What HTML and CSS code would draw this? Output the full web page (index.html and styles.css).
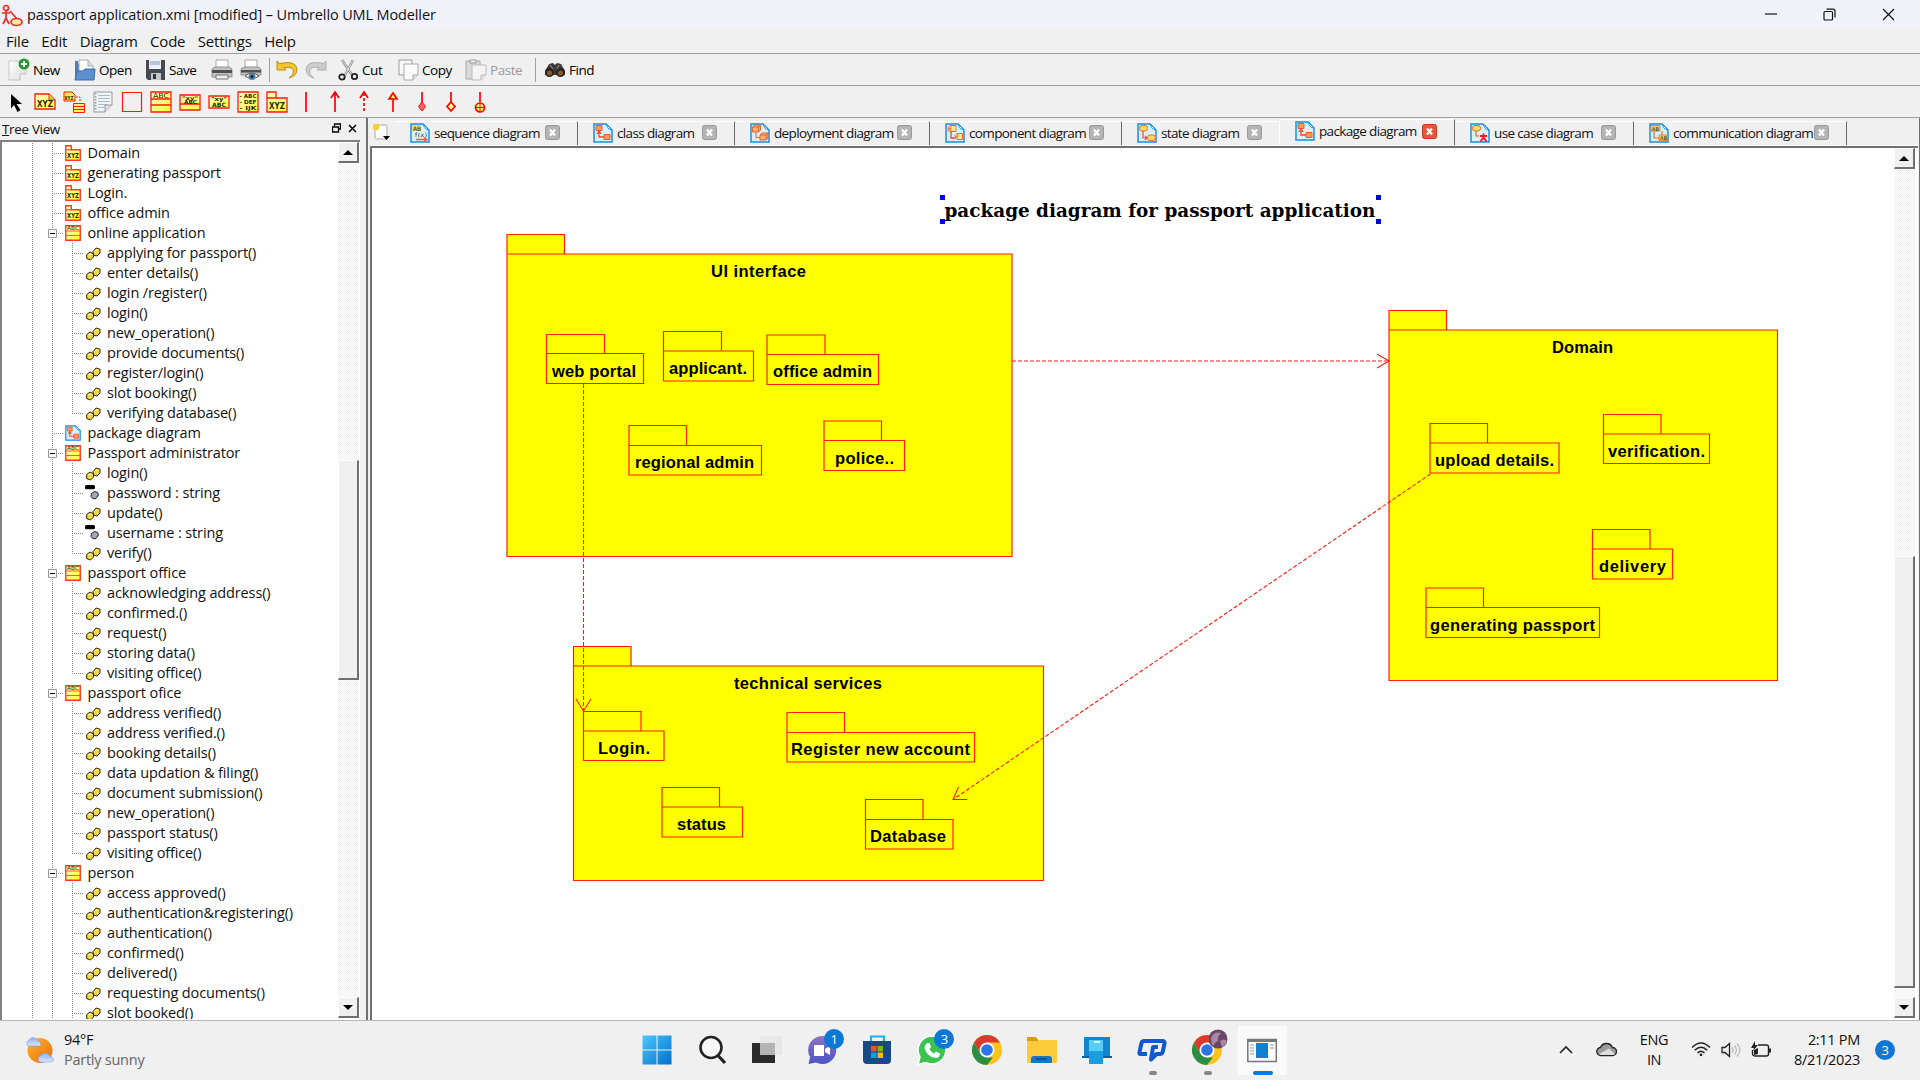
FILE: index.html
```html
<!DOCTYPE html>
<html lang="en">
<head>
<meta charset="utf-8">
<title>passport application.xmi [modified] – Umbrello UML Modeller</title>
<link rel="stylesheet" href="styles.css">
</head>
<body>
<svg class="defs" width="40" height="40" aria-hidden="true">
  <defs>
    <linearGradient id="yel" x1="0" y1="0" x2="1" y2="1"><stop offset="0" stop-color="#ffffc8"/><stop offset="1" stop-color="#ffff30"/></linearGradient>
    <linearGradient id="doc" x1="0" y1="0" x2="1" y2="1"><stop offset="0" stop-color="#fff"/><stop offset="1" stop-color="#ddd"/></linearGradient>
    <linearGradient id="win" x1="0" y1="0" x2="1" y2="1"><stop offset="0" stop-color="#4cc8fa"/><stop offset="1" stop-color="#0070cc"/></linearGradient>
    <linearGradient id="sun" x1="0" y1="0" x2="1" y2="1"><stop offset="0" stop-color="#fab52a"/><stop offset="1" stop-color="#ee6c0e"/></linearGradient>
    <linearGradient id="cld" x1="0" y1="0" x2="0" y2="1"><stop offset="0" stop-color="#8fb0ee"/><stop offset="1" stop-color="#dbe6fc"/></linearGradient>
    <linearGradient id="pur" x1="0" y1="0" x2="0" y2="1"><stop offset="0" stop-color="#9073bd"/><stop offset="1" stop-color="#4b55c8"/></linearGradient>
  </defs>
  <symbol id="g1" viewBox="0 0 62 20"><path class="guide" d="M30.5 0V20M50.5 0V20M52 10.5H61"/></symbol>
  <symbol id="g1x" viewBox="0 0 62 20"><path class="guide" d="M30.5 0V20M50.5 0V20M56 10.5H61"/><path d="M46.5 6.5h8v8h-8z" fill="#fff" stroke="#999"/><path d="M48 10.5h5" stroke="#000"/></symbol>
  <symbol id="g2" viewBox="0 0 82 20"><path class="guide" d="M30.5 0V20M50.5 0V20M70.5 0V20M72 10.5H81"/></symbol>
  <symbol id="g2e" viewBox="0 0 82 20"><path class="guide" d="M30.5 0V20M50.5 0V20M70.5 0V10M70 10.5H81"/></symbol>
  <symbol id="pkg" viewBox="0 0 16 16"><path d="M.75.75h5.5v4h9v10.5H.75z" fill="url(#yel)" stroke="#ff3a20" stroke-width="1.4"/><path d="M1 4.8h6" stroke="#ff3a20"/><text x="2" y="13.4" font-size="7" textLength="12" lengthAdjust="spacingAndGlyphs" class="it b">XYZ</text></symbol>
  <symbol id="cls" viewBox="0 0 16 16"><path d="M.75.75h14.5v14.5H.75z" fill="url(#yel)" stroke="#ff3a20" stroke-width="1.4"/><path d="M1 6h14M1 10.5h14" stroke="#ff5a40"/><text x="2" y="5.2" font-size="5.5" textLength="12" lengthAdjust="spacingAndGlyphs" class="it">ABC</text></symbol>
  <symbol id="op" viewBox="0 0 15 14"><g fill="#f2d848" stroke="#2b2600"><path d="M.7 7.500l3.300-2.500 3.500 1.800v3.200L4.500 13 .7 11.500z"/><path d="M7 4.500l3-3.500 4 1.200v3.800L11 9 7.500 8z"/></g><path d="M2.500 8l2-1 1.500.8M8.600 4.500l1.800-1.800 1.600.6" stroke="#fffab0" fill="none"/></symbol>
  <symbol id="at" viewBox="0 0 15 16"><rect x="0" y="0" width="10" height="4.200" rx="1.500" fill="#000"/><path d="M6.500 8.500l3-2 3 .8 1 2.700-2.500 3.500-3 .3-2-2.300z" fill="#a8a4b4" stroke="#222"/></symbol>
  <symbol id="dg" viewBox="0 0 20 20"><path d="M1 1h12l6 6v12H1z" fill="#d9effc" stroke="#1a8ee0" stroke-width="1.500"/><path d="M13 1c1.500 2 .5 5 6 6z" fill="#fff" stroke="#1a8ee0"/></symbol>
  <symbol id="d-seq" viewBox="0 0 20 20"><use href="#dg"/><path d="M2 2h9v6H2z" fill="#e6d36a"/><text x="3" y="7.500" font-size="6" class="it">AB</text><text x="5" y="14" font-size="6" class="it" textLength="12">f(x)</text><path d="M6 16.500h11m-3-2l3 2-3 2" fill="none" stroke="#f25a38" stroke-width="1.300"/></symbol>
  <symbol id="d-cls" viewBox="0 0 20 20"><use href="#dg"/><path d="M3 2.500h6v5H3zM11 11.500h6v5h-6z" fill="#fb9a63" stroke="#e85b2a"/><path d="M6 8v6h5m-7-3l2-3 2 3" fill="none" stroke="#ef4a2a" stroke-width="1.300"/></symbol>
  <symbol id="d-dep" viewBox="0 0 20 20"><use href="#dg"/><path d="M2.500 4l2-2h6v5l-2 2h-6zM10 12l2-2h6v5l-2 2h-6z" fill="#fdb271" stroke="#e5652a"/><path d="M2.500 4h6l2-2M8.500 4v5M10 12h6l2-2M16 12v5M6 9v5.500h4" fill="none" stroke="#e5652a"/></symbol>
  <symbol id="d-cmp" viewBox="0 0 20 20"><use href="#dg"/><path d="M5 2.500h6v6H5zM12 10.500h5.500v6H12z" fill="#ffe49b" stroke="#ef6a2a"/><path d="M3 4h3v1.500H3zM3 6.500h3V8H3zM10 12h3v1.500h-3z" fill="#fff" stroke="#ef6a2a" stroke-width=".8"/><path d="M6 9v6h5" fill="none" stroke="#ef4a2a" stroke-width="1.300"/></symbol>
  <symbol id="d-sta" viewBox="0 0 20 20"><use href="#dg"/><rect x="2.500" y="2.500" width="8" height="5.500" rx="2.500" fill="#f8da62" stroke="#ef6a2a"/><rect x="10.500" y="12" width="8" height="5.500" rx="2.500" fill="#f8da62" stroke="#ef6a2a"/><path d="M6 8v7h4m-2-2l2 2-2 2" fill="none" stroke="#ef4a2a" stroke-width="1.200"/></symbol>
  <symbol id="d-use" viewBox="0 0 20 20"><use href="#dg"/><rect x="2.500" y="2.500" width="8" height="5.500" rx="2.500" fill="#f8da62" stroke="#ef6a2a"/><path d="M6 8v5h3" fill="none" stroke="#ef6a2a" stroke-width="1.200"/><path d="M13.500 10.500v4.500M10 13h7M13.500 14.500l-3 4M13.500 14.500l3 4" fill="none" stroke="#f01818" stroke-width="1.900"/></symbol>
  <symbol id="d-com" viewBox="0 0 20 20"><use href="#dg"/><path d="M2 2.500h9v5.500H2zM10 12h8v5.500h-8z" fill="#e8cf78" stroke="#d98a4a"/><path d="M5 8v7h5M13 8v4" fill="none" stroke="#ef6a2a" stroke-width="1.200"/><text x="3" y="7.500" font-size="5" class="it">AB</text><text x="11" y="16.700" font-size="5" class="it">AB</text></symbol>
  <symbol id="x" viewBox="0 0 15 15"><rect x=".5" y=".5" width="14" height="14" rx="2" class="xb"/><path d="M5 4.500l5 6M10 4.500l-5 6" stroke="#fff" stroke-width="2.200"/></symbol>
  <symbol id="chrome" viewBox="0 0 30 30"><circle cx="15" cy="15" r="15" fill="#fbc31b"/><path d="M2 7.500A15 15 0 0 1 28 7.500H15L8.500 18.800z" fill="#db3a2c"/><path d="M2 7.500L8.500 18.800 15 22.500h6L15 30A15 15 0 0 1 2 7.500z" fill="#2a8f46"/><circle cx="15" cy="15" r="7.500" fill="#fff"/><circle cx="15" cy="15" r="5.800" fill="#2d74e8"/></symbol>
</svg>

<div class="window">
  <header class="titlebar">
    <svg width="22" height="24" viewBox="0 0 22 24" fill="none" stroke="#f02c22" stroke-width="1.700"><circle cx="5" cy="5" r="2.500"/><path d="M5 8v7M1 10h8M5 15l-3 6M5 15l3 6M9 8l7 8"/><ellipse cx="15.500" cy="19" rx="5.500" ry="3.500" fill="#ffe9a8"/></svg>
    <h1>passport application.xmi [modified] – Umbrello UML Modeller</h1>
    <div class="winbtns">
      <svg viewBox="0 0 13 13"><path d="M1 6h12"/></svg>
      <svg viewBox="0 0 13 13"><rect x="1" y="3.500" width="8.500" height="8.500" rx="1"/><path d="M3.500 1.200H10q2 0 2 2v6.300"/></svg>
      <svg viewBox="0 0 13 13"><path d="M1 1l11 11M12 1L1 12"/></svg>
    </div>
  </header>

  <nav class="menubar"><span>File</span><span>Edit</span><span>Diagram</span><span>Code</span><span>Settings</span><span>Help</span></nav>

  <div class="toolbar">
    <button class="t-new"><svg width="22" height="24" viewBox="0 0 22 24"><path d="M1 3h17v12l-6 7H1z" fill="url(#doc)" stroke="#c8c8c8"/><path d="M12 22v-6h6" fill="#f4f4f4" stroke="#bbb"/><circle cx="16" cy="6" r="5.500" fill="#1f9c2c"/><path d="M16 3v6M13 6h6" stroke="#fff" stroke-width="2"/></svg>New</button>
    <button class="t-open"><svg width="22" height="24" viewBox="0 0 22 24"><path d="M1 21V3h3v3h14v9z" fill="#4d7dbb"/><path d="M5 2h9l5 6v6H5z" fill="#fbfbfb" stroke="#aaa"/><path d="M14 2v6h5" fill="#ddd" stroke="#aaa"/><path d="M1 22l2-9h6l2-2h10l-1 11z" fill="#5d90cf" stroke="#3c6baa"/></svg>Open</button>
    <button class="t-save"><svg width="21" height="22" viewBox="0 0 21 22"><path d="M1 1h19v20H3l-2-2z" fill="#454a52"/><path d="M4 1h12v9H4z" fill="#eceff3"/><path d="M5 3h10M5 5h10" stroke="#7d96c0"/><path d="M6 14h10v7H6z" fill="#c4c8ce"/><path d="M8 15h3v5H8z" fill="#333"/></svg>Save</button>
    <button class="t-print"><svg width="22" height="22" viewBox="0 0 22 22"><path d="M5 1h12v8H5z" fill="#fff" stroke="#aaa"/><path d="M1 10l3-2h14l3 2v8H1z" fill="#c2c2c2" stroke="#909090"/><path d="M1 11h20v3H1z" fill="#505050"/><path d="M5 16h12v4H5z" fill="#eee" stroke="#777"/></svg></button>
    <button class="t-prev"><svg width="22" height="22" viewBox="0 0 22 22"><path d="M5 1h12v8H5z" fill="#fff" stroke="#aaa"/><path d="M1 10l3-2h14l3 2v6H1z" fill="#c2c2c2" stroke="#909090"/><path d="M1 11h20v2.500H1z" fill="#505050"/><path d="M5 17q6-6 14 0-7 5-14 0z" fill="#fff" stroke="#555"/><circle cx="12" cy="17.500" r="3.500" fill="#4d7ea8"/><circle cx="12" cy="17.500" r="1.500" fill="#123"/></svg></button>
    <i class="sep s1"></i>
    <button class="t-undo"><svg width="22" height="20" viewBox="0 0 22 20"><path d="M1 1l2.500 2.500Q20 0 21 9q0 7-8 9 5-3 4.500-7-.5-4.500-9.500-3.500L10 10H1z" fill="#f3c62c" stroke="#b98c10"/></svg></button>
    <button class="t-redo"><svg width="22" height="20" viewBox="0 0 22 20"><path d="M21 1l-2.500 2.500Q2 0 1 9q0 7 8 9-5-3-4.500-7 .5-4.500 9.500-3.500L12 10h9z" fill="#ccc" stroke="#b0b0b0"/></svg></button>
    <button class="t-cut"><svg width="21" height="22" viewBox="0 0 21 22"><path d="M4 1l10 15M15 1L7 16" stroke="#888" stroke-width="2.400"/><path d="M4 1l10 15M15 1L7 16" stroke="#e8e8e8" stroke-width="1"/><circle cx="4" cy="18" r="2.700" fill="none" stroke="#222" stroke-width="1.800"/><circle cx="16.500" cy="17.500" r="2.700" fill="none" stroke="#222" stroke-width="1.800"/></svg>Cut</button>
    <button class="t-copy"><svg width="21" height="22" viewBox="0 0 21 22"><path d="M1 1h13v15H1z" fill="#f8f8f8" stroke="#999"/><path d="M6 5h14v11l-5 5H6z" fill="#fbfbfb" stroke="#aaa"/><path d="M15 21v-5h5" fill="#e5e5e5" stroke="#aaa"/></svg>Copy</button>
    <button class="t-paste"><svg width="22" height="22" viewBox="0 0 22 22"><path d="M1 2h14v18H1z" fill="#d9d9d9" stroke="#aaa"/><path d="M5 1h6v3H5z" fill="#eee" stroke="#999"/><path d="M7 6h14v10l-5 5H7z" fill="#f4f4f4" stroke="#bbb"/><path d="M16 21v-5h5" fill="#e5e5e5" stroke="#bbb"/></svg>Paste</button>
    <i class="sep s2"></i>
    <button class="t-find"><svg width="22" height="16" viewBox="0 0 22 16"><path d="M1 9l4-7 4-1 2 2 2-2 4 1 4 7v4H1z" fill="#3d3a38"/><circle cx="5.500" cy="10.500" r="4.500" fill="#2a2420"/><circle cx="16.500" cy="10.500" r="4.500" fill="#2a2420"/><circle cx="5.500" cy="11" r="2.500" fill="#8a5a30"/><circle cx="16.500" cy="11" r="2.500" fill="#8a5a30"/><path d="M6 3l3 4M15 3l-2 4" stroke="#999"/></svg>Find</button>
  </div>

  <div class="drawbar">
    <svg viewBox="0 0 22 22"><path d="M6 3l11 10h-5.500l4 6-3 2-3.500-7L6 17.500z" fill="#000"/></svg>
    <svg viewBox="0 0 22 22"><path d="M1 3h14l6 6v9H1z" fill="url(#yel)" stroke="#f02000" stroke-width="1.300"/><path d="M15 3v6h6" fill="#ffd040" stroke="#f02000"/><text x="3" y="16" font-size="8.500" textLength="16" lengthAdjust="spacingAndGlyphs" class="it b">XYZ</text></svg>
    <svg viewBox="0 0 22 22"><path d="M1 1h8l3 3v6H1z" fill="#ffe95a" stroke="#f02000"/><text x="1.500" y="9" font-size="5.500" textLength="9" lengthAdjust="spacingAndGlyphs" class="it b">XYZ</text><path d="M13 6h4v5" fill="none" stroke="#f02000" stroke-dasharray="2 1"/><path d="M10.500 12.500h11v9h-11zM10.500 15.500h11M10.500 18.500h11" fill="#ffee70" stroke="#f02000"/></svg>
    <svg viewBox="0 0 22 22"><path d="M2 1h18v13l-7 7H2z" fill="#f2f4f6" stroke="#999"/><path d="M6 4.500h12M6 7.500h12M6 10.500h12M6 13.500h9M6 16.500h6" stroke="#a9bccd"/><path d="M13 21v-7h7" fill="#ddd" stroke="#999"/><path d="M3.800 2v18" stroke="#777" stroke-dasharray="1.500 1.500"/></svg>
    <svg viewBox="0 0 22 22"><path d="M1.500 1.500h19v19h-19z" fill="none" stroke="#ff1a10" stroke-width="1.200"/></svg>
    <svg viewBox="0 0 22 22"><path d="M1 1h20v20H1zM1 8h20M1 14h20" fill="url(#yel)" stroke="#ff1a10" stroke-width="1.300"/><text x="3" y="7" font-size="7" textLength="16" lengthAdjust="spacingAndGlyphs" class="it">ABC</text></svg>
    <svg viewBox="0 0 22 22"><path d="M1 4h20v15H1zM1 13h20" fill="url(#yel)" stroke="#ff1a10" stroke-width="1.300"/><text x="3" y="8.500" font-size="5" textLength="16" lengthAdjust="spacingAndGlyphs" class="it b">"xy"</text><text x="5" y="12.500" font-size="5.500" textLength="13" lengthAdjust="spacingAndGlyphs" class="it b">ABC</text></svg>
    <svg viewBox="0 0 22 22"><path d="M1 5h20v12H1z" fill="url(#yel)" stroke="#ff1a10" stroke-width="1.300"/><text x="3" y="10" font-size="5.500" textLength="16" lengthAdjust="spacingAndGlyphs" class="it b">"xy"</text><text x="4" y="15.800" font-size="6" textLength="14" lengthAdjust="spacingAndGlyphs" class="it b">ABC</text></svg>
    <svg viewBox="0 0 22 22"><path d="M1 1h20v20H1z" fill="url(#yel)" stroke="#ff1a10" stroke-width="1.300"/><g font-size="5.500"><text x="2.500" y="7" textLength="17" lengthAdjust="spacingAndGlyphs" class="it b">- ABC</text><text x="2.500" y="13" textLength="17" lengthAdjust="spacingAndGlyphs" class="it b">- DEF</text><text x="2.500" y="19" textLength="17" lengthAdjust="spacingAndGlyphs" class="it b">- IJK</text></g></svg>
    <svg viewBox="0 0 22 22"><path d="M1 1h9v6h11v14H1zM1 7h9" fill="url(#yel)" stroke="#ff1a10" stroke-width="1.300"/><text x="3" y="18" font-size="9" textLength="16" lengthAdjust="spacingAndGlyphs" class="it b">XYZ</text></svg>
    <svg viewBox="0 0 22 22" class="red"><path d="M11 1v20"/></svg>
    <svg viewBox="0 0 22 22" class="red"><path d="M11 2v19M7 7l4-6 4 6"/></svg>
    <svg viewBox="0 0 22 22" class="red"><path d="M11 2v19" stroke-dasharray="3 2"/><path d="M7 7l4-6 4 6"/></svg>
    <svg viewBox="0 0 22 22" class="red"><path d="M11 8v13"/><path d="M7 8l4-6 4 6z" fill="#ffff70"/></svg>
    <svg viewBox="0 0 22 22" class="red"><path d="M11 1v10"/><path d="M11 11l3.500 4.500L11 20l-3.500-4.500z" fill="#f66" stroke-width="1"/></svg>
    <svg viewBox="0 0 22 22" class="red"><path d="M11 1v10"/><path d="M11 11l4 4.500-4 4.500-4-4.500z" fill="#ffff90"/></svg>
    <svg viewBox="0 0 22 22" class="red"><path d="M11 1v10"/><circle cx="11" cy="16.500" r="4.500" fill="#ffff60"/><path d="M11 12v9M7 16.500h8" stroke-width="1"/></svg>
  </div>

  <main class="workspace">
    <aside class="dock">
      <div class="dockhead"><span><u>T</u>ree View</span>
        <svg width="9" height="10" viewBox="0 0 9 10"><path d="M2.500 3V1h6v5h-2" fill="none" stroke="#000" stroke-width="1.300"/><path d="M.5 4h6v5h-6z" fill="none" stroke="#000" stroke-width="1.300"/></svg>
        <svg width="9" height="9" viewBox="0 0 9 9"><path d="M1 1l7 7M8 1L1 8" stroke="#000" stroke-width="1.500"/></svg>
      </div>
      <div class="treebox">
        <ul class="tree">
          <li><svg class="g1"><use href="#g1"/></svg><svg class="ic"><use href="#pkg"/></svg>Domain</li>
          <li><svg class="g1"><use href="#g1"/></svg><svg class="ic"><use href="#pkg"/></svg>generating passport</li>
          <li><svg class="g1"><use href="#g1"/></svg><svg class="ic"><use href="#pkg"/></svg>Login.</li>
          <li><svg class="g1"><use href="#g1"/></svg><svg class="ic"><use href="#pkg"/></svg>office admin</li>
          <li><svg class="g1"><use href="#g1x"/></svg><svg class="ic"><use href="#cls"/></svg>online application</li>
          <li><svg class="g2"><use href="#g2"/></svg><svg class="op"><use href="#op"/></svg>applying for passport()</li>
          <li><svg class="g2"><use href="#g2"/></svg><svg class="op"><use href="#op"/></svg>enter details()</li>
          <li><svg class="g2"><use href="#g2"/></svg><svg class="op"><use href="#op"/></svg>login /register()</li>
          <li><svg class="g2"><use href="#g2"/></svg><svg class="op"><use href="#op"/></svg>login()</li>
          <li><svg class="g2"><use href="#g2"/></svg><svg class="op"><use href="#op"/></svg>new_operation()</li>
          <li><svg class="g2"><use href="#g2"/></svg><svg class="op"><use href="#op"/></svg>provide documents()</li>
          <li><svg class="g2"><use href="#g2"/></svg><svg class="op"><use href="#op"/></svg>register/login()</li>
          <li><svg class="g2"><use href="#g2"/></svg><svg class="op"><use href="#op"/></svg>slot booking()</li>
          <li><svg class="g2"><use href="#g2e"/></svg><svg class="op"><use href="#op"/></svg>verifying database()</li>
          <li><svg class="g1"><use href="#g1"/></svg><svg class="ic"><use href="#d-cls"/></svg>package diagram</li>
          <li><svg class="g1"><use href="#g1x"/></svg><svg class="ic"><use href="#cls"/></svg>Passport administrator</li>
          <li><svg class="g2"><use href="#g2"/></svg><svg class="op"><use href="#op"/></svg>login()</li>
          <li><svg class="g2"><use href="#g2"/></svg><svg class="at"><use href="#at"/></svg>password : string</li>
          <li><svg class="g2"><use href="#g2"/></svg><svg class="op"><use href="#op"/></svg>update()</li>
          <li><svg class="g2"><use href="#g2"/></svg><svg class="at"><use href="#at"/></svg>username : string</li>
          <li><svg class="g2"><use href="#g2e"/></svg><svg class="op"><use href="#op"/></svg>verify()</li>
          <li><svg class="g1"><use href="#g1x"/></svg><svg class="ic"><use href="#cls"/></svg>passport office</li>
          <li><svg class="g2"><use href="#g2"/></svg><svg class="op"><use href="#op"/></svg>acknowledging address()</li>
          <li><svg class="g2"><use href="#g2"/></svg><svg class="op"><use href="#op"/></svg>confirmed.()</li>
          <li><svg class="g2"><use href="#g2"/></svg><svg class="op"><use href="#op"/></svg>request()</li>
          <li><svg class="g2"><use href="#g2"/></svg><svg class="op"><use href="#op"/></svg>storing data()</li>
          <li><svg class="g2"><use href="#g2e"/></svg><svg class="op"><use href="#op"/></svg>visiting office()</li>
          <li><svg class="g1"><use href="#g1x"/></svg><svg class="ic"><use href="#cls"/></svg>passport ofice</li>
          <li><svg class="g2"><use href="#g2"/></svg><svg class="op"><use href="#op"/></svg>address verified()</li>
          <li><svg class="g2"><use href="#g2"/></svg><svg class="op"><use href="#op"/></svg>address verified.()</li>
          <li><svg class="g2"><use href="#g2"/></svg><svg class="op"><use href="#op"/></svg>booking details()</li>
          <li><svg class="g2"><use href="#g2"/></svg><svg class="op"><use href="#op"/></svg>data updation &amp; filing()</li>
          <li><svg class="g2"><use href="#g2"/></svg><svg class="op"><use href="#op"/></svg>document submission()</li>
          <li><svg class="g2"><use href="#g2"/></svg><svg class="op"><use href="#op"/></svg>new_operation()</li>
          <li><svg class="g2"><use href="#g2"/></svg><svg class="op"><use href="#op"/></svg>passport status()</li>
          <li><svg class="g2"><use href="#g2e"/></svg><svg class="op"><use href="#op"/></svg>visiting office()</li>
          <li><svg class="g1"><use href="#g1x"/></svg><svg class="ic"><use href="#cls"/></svg>person</li>
          <li><svg class="g2"><use href="#g2"/></svg><svg class="op"><use href="#op"/></svg>access approved()</li>
          <li><svg class="g2"><use href="#g2"/></svg><svg class="op"><use href="#op"/></svg>authentication&amp;registering()</li>
          <li><svg class="g2"><use href="#g2"/></svg><svg class="op"><use href="#op"/></svg>authentication()</li>
          <li><svg class="g2"><use href="#g2"/></svg><svg class="op"><use href="#op"/></svg>confirmed()</li>
          <li><svg class="g2"><use href="#g2"/></svg><svg class="op"><use href="#op"/></svg>delivered()</li>
          <li><svg class="g2"><use href="#g2"/></svg><svg class="op"><use href="#op"/></svg>requesting documents()</li>
          <li><svg class="g2"><use href="#g2"/></svg><svg class="op"><use href="#op"/></svg>slot booked()</li>
        </ul>
        <div class="scroll tree-scroll"><b class="up"></b><i></i><b class="down"></b></div>
      </div>
    </aside>

    <section class="view">
      <div class="tabs">
        <svg class="newtab" width="19" height="18" viewBox="0 0 19 18"><rect x="3" y="2" width="12" height="14" rx="1.500" fill="#fbfbfb" stroke="#aaa"/><circle cx="4" cy="4" r="3.200" fill="#f5d030"/><path d="M11 13h7l-3.500 4z"/></svg>
        <div class="tab w1"><svg><use href="#d-seq"/></svg><span>sequence diagram</span><svg class="x"><use href="#x"/></svg></div>
        <div class="tab w2"><svg><use href="#d-cls"/></svg><span>class diagram</span><svg class="x"><use href="#x"/></svg></div>
        <div class="tab w3"><svg><use href="#d-dep"/></svg><span>deployment diagram</span><svg class="x"><use href="#x"/></svg></div>
        <div class="tab w4"><svg><use href="#d-cmp"/></svg><span>component diagram</span><svg class="x"><use href="#x"/></svg></div>
        <div class="tab w5"><svg><use href="#d-sta"/></svg><span>state diagram</span><svg class="x"><use href="#x"/></svg></div>
        <div class="tab w6 active"><svg><use href="#d-cls"/></svg><span>package diagram</span><svg class="x"><use href="#x"/></svg></div>
        <div class="tab w7"><svg><use href="#d-use"/></svg><span>use case diagram</span><svg class="x"><use href="#x"/></svg></div>
        <div class="tab w8"><svg><use href="#d-com"/></svg><span>communication diagram</span><svg class="x"><use href="#x"/></svg></div>
      </div>
      <div class="frame">
        <svg class="canvas" viewBox="372 148 1524 871" width="1524" height="871">
          <g class="pk">
            <path d="M507 254V234.500h57.500V254M507 254H1012V556.500H507z"/>
            <path d="M1389 330V310.500h57.500V330M1389 330H1777.500V680.500H1389z"/>
            <path d="M573.500 666V646.500h57.500V666M573.500 666H1043.500V880.500H573.500z"/>
            <path d="M546.500 353.500V334.500h58V353.500M546.500 353.500H643.500V383.500H546.500z"/>
            <path d="M663.500 351V331.500h58V351M663.500 351H753.500V381H663.500z"/>
            <path d="M767 354.500V335h58V354.500M767 354.500H878.500V384.500H767z"/>
            <path d="M629 445.500V425.500h57.500V445.500M629 445.500H761.500V475H629z"/>
            <path d="M824 440.500V421h57.500V440.500M824 440.500H904.500V470.500H824z"/>
            <path d="M1430 443V423.500h57.500V443M1430 443H1559V473H1430z"/>
            <path d="M1603.500 434V414.500h57.500V434M1603.500 434H1709.500V463.500H1603.500z"/>
            <path d="M1592.500 549V529.500h57.500V549M1592.500 549H1672.500V579H1592.500z"/>
            <path d="M1426 607.500V588h57.500V607.500M1426 607.500H1599.500V637.500H1426z"/>
            <path d="M583.500 731V711.500h57.500V731M583.500 731H664V760.500H583.500z"/>
            <path d="M787 732.500V712.500h57.500V732.500M787 732.500H974.500V762H787z"/>
            <path d="M662 807V787.500h57.500V807M662 807H742.500V837H662z"/>
            <path d="M865.500 819.500V799.500h57.500V819.500M865.500 819.500H953V849H865.500z"/>
          </g>
          <g class="ln">
            <path d="M1012 361H1389M583.500 384V711M1430.500 474L953 799.500" stroke-dasharray="4 2"/>
            <path d="M1377 354l12 7-12 7M576 699l7.500 12 7.500-12M958.500 787l-5.500 12.500h14"/>
          </g>
          <g class="nm">
            <text x="711" y="277" textLength="95">UI interface</text>
            <text x="552" y="376.500" textLength="84">web portal</text>
            <text x="669" y="374" textLength="78">applicant.</text>
            <text x="773" y="377" textLength="99">office admin</text>
            <text x="635" y="468" textLength="119">regional admin</text>
            <text x="835" y="464" textLength="59">police..</text>
            <text x="1552" y="353" textLength="61">Domain</text>
            <text x="1435" y="466" textLength="119">upload details.</text>
            <text x="1608" y="457" textLength="97">verification.</text>
            <text x="1599" y="572" textLength="67">delivery</text>
            <text x="1430" y="631" textLength="165">generating passport</text>
            <text x="734" y="689" textLength="148">technical services</text>
            <text x="598" y="754" textLength="52">Login.</text>
            <text x="791" y="755" textLength="179">Register new account</text>
            <text x="677" y="830" textLength="49">status</text>
            <text x="870" y="842" textLength="76">Database</text>
          </g>
          <text class="caption" x="944.500" y="216.500" textLength="431" lengthAdjust="spacingAndGlyphs">package diagram for passport application</text>
          <path d="M940 195h5v5h-5zM940 219h5v5h-5zM1376 195h5v5h-5zM1376 219h5v5h-5z" fill="#00f"/>
        </svg>
        <div class="scroll view-scroll"><b class="up"></b><i></i><b class="down"></b></div>
      </div>
    </section>
  </main>

  <footer class="taskbar">
    <div class="weather">
      <svg width="30" height="30" viewBox="0 0 30 30"><circle cx="15" cy="15.500" r="12.500" fill="url(#sun)"/><path d="M3 11a3.500 3.500 0 0 1 1-6 5 5 0 0 1 9 1 3 3 0 0 1 2 5z" fill="url(#cld)" stroke="#7f9fe2" stroke-width=".6"/><path d="M15 27a3.500 3.500 0 0 1 1-6.500 5 5 0 0 1 9 1 3 3 0 0 1 2 5.500z" fill="url(#cld)" stroke="#7f9fe2" stroke-width=".6"/></svg>
      <div>94°F<small>Partly sunny</small></div>
    </div>
    <div class="apps">
      <div class="app"><svg viewBox="0 0 30 30"><path d="M.5.500h14v14h-14zM15.500.500h14v14h-14zM.5 15.500h14v14h-14zM15.500 15.500h14v14h-14z" fill="url(#win)"/></svg></div>
      <div class="app"><svg viewBox="0 0 30 30" fill="none" stroke="#222" stroke-width="2.600"><circle cx="14" cy="12.500" r="10.500" fill="#f6f6f6"/><path d="M21 20.500l7 7.500" stroke-width="3.200"/></svg></div>
      <div class="app"><svg viewBox="0 0 30 30"><path d="M0 8h23v20H0z" fill="#2b2b2b"/><path d="M8 1h22v19H8z" fill="#e6e6e6" opacity=".9"/><path d="M8 8h15v12H8z" fill="#b4b4b4"/></svg></div>
      <div class="app"><svg viewBox="0 0 30 30"><path d="M15 1a14 14 0 1 1-6 26.500L1.500 29 3 22A14 14 0 0 1 15 1z" fill="url(#pur)"/><path d="M7 10h10v11H7zM18 14l5-3v9l-5-3z" fill="#fff"/></svg><em>1</em></div>
      <div class="app"><svg viewBox="0 0 30 30"><path d="M9 7V1.500h13V7" fill="none" stroke="#18b4ea" stroke-width="2.200"/><path d="M1 6h28v19q0 4-4 4H5q-4 0-4-4z" fill="#174a84"/><path d="M9 11h5.500v5.500H9z" fill="#f25022"/><path d="M15.500 11H21v5.500h-5.500z" fill="#7fba00"/><path d="M9 17.500h5.500V23H9z" fill="#00a4ef"/><path d="M15.500 17.500H21V23h-5.500z" fill="#ffb900"/></svg></div>
      <div class="app"><svg viewBox="0 0 30 30"><path d="M15 1a14 14 0 1 1-6.500 26.500L1 29.500l2-7.500A14 14 0 0 1 15 1z" fill="#3ac351" stroke="#fff" stroke-width="1.500"/><path d="M10 8l2.500 0 1.500 4-1.500 2q1.500 3 4.500 4.500l2-2 4 2q0 4-4 4.500-9-1-11.500-10 0-3 2.500-5z" fill="#fff"/></svg><em>3</em></div>
      <div class="app"><svg viewBox="0 0 30 30"><use href="#chrome"/></svg></div>
      <div class="app"><svg viewBox="0 0 30 30"><path d="M0 2h9l3 4h-12z" fill="#dc9a10"/><path d="M0 6h11l2-1h17v23H0z" fill="#fccb3c"/><path d="M4 28v-4q0-3 3-3h15q3 0 3 3v4z" fill="#1079cd"/><path d="M9 24h11" stroke="#05579c" stroke-width="2"/></svg></div>
      <div class="app"><svg viewBox="0 0 30 30"><path d="M2 2h26v19H2z" fill="#1584cf"/><path d="M0 21h30v2H0z" fill="#0f5f9e"/><path d="M7 5h14v11H7z" fill="#55cdf5"/><path d="M7 16h14v13H7z" fill="#1a9ee0"/><path d="M12 7h6" stroke="#fff" stroke-width="1.500"/></svg></div>
      <div class="app dot"><svg viewBox="0 0 30 30" fill="none" stroke="#1259cf" stroke-width="4" stroke-linejoin="round"><path d="M10 19H3.500q-1.500 0-1-2L4.500 8q.5-2 2.500-2h18.500q2.500 0 2 2.500l-1.700 8q-.6 2.500-3 2.500h-3.300L14 24.500 16 12h5"/></svg></div>
      <div class="app dot"><svg viewBox="0 0 30 30"><use href="#chrome"/><circle cx="26" cy="4" r="9.500" fill="#6a4668"/><path d="M19 3q3-7 10-5-4 4-3 8-3 1-5 5-2-3-2-8zM28 6q4-3 7 0-2 5-5 6z" fill="#a986a4"/></svg></div>
      <div class="app cur"><svg viewBox="0 0 30 30"><path d="M.8 4.500h28.500v22H.8z" fill="#fafafa" stroke="#777" stroke-width="1.500"/><path d="M1 5h28v2H1z" fill="#777"/><path d="M9 8h12v15H9z" fill="#0f7fd2"/><path d="M3 10h4M3 13h4M3 16h4M3 19h4M23 10h4M23 13h4" stroke="#999"/></svg></div>
    </div>
    <div class="tray">
      <svg class="chev" width="14" height="9" viewBox="0 0 14 9"><path d="M1 8l6-6 6 6" fill="none" stroke="#222" stroke-width="1.600"/></svg>
      <svg class="cloud" width="21" height="15" viewBox="0 0 21 15"><path d="M5 13.500a4 4 0 0 1-.5-8 6.500 6.500 0 0 1 12 0 4 4 0 0 1 0 8z" fill="#9a9a9a" stroke="#222" stroke-width="1.300"/><path d="M3 12L13 6.500l6 5.500q-1 1-3 1H5z" fill="#dedede"/></svg>
      <div class="lang">ENG<br>IN</div>
      <svg class="wifi" width="20" height="15" viewBox="0 0 20 15" fill="none" stroke="#222" stroke-width="1.400"><path d="M1 5.500q9-9 18 0M3.700 8.300q6.300-6.300 12.600 0M6.500 11q3.500-3.500 7 0"/><circle cx="10" cy="12.800" r="1.400" fill="#222" stroke="none"/></svg>
      <svg class="vol" width="21" height="16" viewBox="0 0 21 16" fill="none" stroke="#222" stroke-width="1.300"><path d="M1 5.500h3l4.500-4v13l-4.500-4H1z"/><path d="M11 5.500q2 2.500 0 5M13.500 3.500q4 4.500 0 9M16 1.500q6 6.500 0 13" stroke="#bbb"/></svg>
      <svg class="bat" width="21" height="17" viewBox="0 0 21 17"><path d="M7 4h8.500q2 0 2 2v7q0 2-2 2H4q-2.500 0-2.500-2.500V9" fill="none" stroke="#222" stroke-width="1.400"/><path d="M18 7.500h2v4h-2zM3 9l4-2v6l-4 1zM4 0L0 7h3L2 10l5-6H4z" fill="#222"/></svg>
      <div class="clock">2:11 PM<br>8/21/2023</div>
      <em class="count">3</em>
    </div>
  </footer>
</div>
</body>
</html>
```
FILE: styles.css
```css
* { box-sizing: border-box; }
body { margin: 0; width: 1920px; height: 1080px; overflow: hidden; font: 14.5px/20px "Open Sans", "Noto Sans", sans-serif; color: #111; background: #f0f0f0; }
svg { display: block; flex: none; }
.defs { position: absolute; z-index: -1; overflow: visible; }
symbol { overflow: visible; }
.it { font-family: "DejaVu Sans", sans-serif; fill: #2a2a00; letter-spacing: 0; }
.b { font-weight: bold; }
.guide { stroke: #8c8c8c; stroke-dasharray: 1 1; fill: none; }

.window { display: grid; grid-template-rows: 29px 25px 32px 32px 902px 60px; height: 1080px; }

.titlebar { display: flex; align-items: center; background: #f1f2f9; padding-left: 1px; }
.titlebar h1 { margin: 0 0 0 4px; font-size: 14.5px; font-weight: 400; letter-spacing: -.13px; flex: 1; }
.winbtns { display: flex; gap: 46px; padding-right: 25px; }
.winbtns svg { width: 13px; height: 13px; fill: none; stroke: #111; stroke-width: 1.2; }

.menubar { display: flex; gap: 12.5px; padding: 2px 6px 0; border-bottom: 1px solid #a0a0a0; font-size: 15px; letter-spacing: -.22px; }

.toolbar { display: flex; align-items: center; border-bottom: 1px solid #a0a0a0; padding-left: 8px; }
.toolbar button { display: flex; align-items: center; gap: 3px; border: 0; padding: 0; background: none; font: 13.5px "Open Sans", sans-serif; letter-spacing: -.45px; color: #000; white-space: nowrap; text-align: left; }
.t-new { width: 66px; }
.t-open { width: 71px; }
.t-save { width: 66px; }
.t-print { width: 29px; }
.t-prev { width: 29px; }
.t-undo { width: 29px; }
.t-redo { width: 33px; }
.t-cut { width: 60px; }
.t-copy { width: 67px; }
.t-paste { width: 70px; }
.toolbar .t-paste { color: #999; }
.sep { width: 1px; height: 24px; background: #a0a0a0; }
.s1 { margin-right: 6px; }
.s2 { margin-right: 8px; }

.drawbar { display: flex; align-items: center; gap: 7px; padding-left: 5px; border-bottom: 1px solid #a0a0a0; }
.drawbar svg { width: 22px; height: 22px; }
.red { fill: none; stroke: #f00; stroke-width: 1.7; }

.workspace { display: grid; grid-template-columns: 366px 1554px; min-height: 0; }
.dock { display: flex; flex-direction: column; padding-right: 6px; min-height: 0; }
.dockhead { display: flex; align-items: center; height: 22px; padding: 0 3px 2px 2px; gap: 7px; font-size: 13.5px; letter-spacing: -.35px; }
.dockhead span { flex: 1; padding-top: 2px; }
.treebox { display: flex; flex: 1; min-height: 0; background: #fff; border: 2px solid #828282; border-width: 2px 0 0 2px; overflow: hidden; }
.tree { list-style: none; margin: 0; padding: 1px 0 0; flex: 1; height: 877px; overflow: hidden; }
.tree li { display: flex; align-items: center; height: 20px; white-space: nowrap; font-size: 14.5px; letter-spacing: -.13px; }
.g1 { width: 62px; height: 20px; }
.g2 { width: 82px; height: 20px; }
.ic { width: 16px; height: 16px; margin: 0 6.5px 0 1px; }
.op { width: 15px; height: 14px; margin: 1px 6px 0 2px; }
.at { width: 15px; height: 16px; margin: 0 7px 0 1px; }

.scroll { display: flex; flex-direction: column; width: 21px; background: repeating-conic-gradient(#fff 0 25%, #f0f0f0 0 50%) 0 0 / 2px 2px; }
.scroll b, .scroll i { display: flex; justify-content: center; align-items: center; flex: none; background: #f0f0f0; border: 1px solid #fff; border-right: 2px solid #707070; border-bottom: 2px solid #707070; height: 21px; }
.scroll .down { margin-top: auto; }
.up::before { content: ""; border: 5px solid transparent; border-top: 0; border-bottom: 5px solid #000; }
.down::before { content: ""; border: 5px solid transparent; border-bottom: 0; border-top: 5px solid #000; }
.tree-scroll { height: 876px; margin-right: 1px; }
.tree-scroll i { margin-top: 297px; height: 220px; }
.view-scroll { margin-right: 1px; height: 870px; }
.view-scroll i { margin-top: 387px; height: 432px; }

.view { display: flex; flex-direction: column; border-left: 2px solid #707070; border-right: 1px solid #707070; padding-left: 2px; min-height: 0; }
.tabs { display: flex; align-items: flex-end; height: 28px; border-bottom: 1px solid #fff; }
.newtab { align-self: center; margin: 0 4px 0 2px; }
.tab { --x-fill: #b4b4b4; --x-line: #999; display: flex; align-items: center; height: 24px; padding: 0 0 2px 15px; border-top: 1px solid #fff; border-right: 1px solid #696969; font-size: 13.5px; letter-spacing: -.64px; white-space: nowrap; }
.tab svg { width: 20px; height: 20px; margin-right: 4px; }
.tab span { flex: 1; }
.tab .x { width: 15px; height: 15px; margin-right: 17px; }
.xb { fill: var(--x-fill); stroke: var(--x-line); }
.active { --x-fill: #e4573c; --x-line: #c23a20; height: 26px; padding-bottom: 3px; }
.w1 { width: 183px; }
.w2 { width: 157px; }
.w3 { width: 195px; }
.w4 { width: 192px; }
.w5 { width: 158px; border-right-color: #fff; }
.w6 { width: 175px; }
.w7 { width: 179px; }
.w8 { width: 213px; }
.frame { display: flex; flex: 1; min-height: 0; margin-right: 1px; background: #fff; border: 2px solid #707070; border-width: 2px 0 0 2px; overflow: hidden; }
.frame .canvas { margin-right: -2px; }
.pk { fill: #ff0; stroke: #ff2000; stroke-width: 1.2; }
.ln { fill: none; stroke: #ff1a10; stroke-width: 1.1; }
.nm { font: bold 16.5px "Liberation Sans", Arial, sans-serif; fill: #000; }
.caption { font: bold 19px "DejaVu Serif", serif; fill: #000; }

.taskbar { display: grid; grid-template-columns: 629px 661px 1fr; background: #f0f0f0; border-top: 1px solid #b8b8b8; }
.weather { display: flex; align-items: center; gap: 9px; padding: 0 0 2px 25px; font-size: 14.5px; letter-spacing: -.25px; }
.weather small { display: block; font-size: 14.5px; color: #666; }
.apps { display: flex; padding-bottom: 1px; }
.app { position: relative; display: flex; align-items: center; justify-content: center; width: 55.1px; }
.app svg { width: 30px; height: 30px; overflow: visible; }
em { display: flex; align-items: center; justify-content: center; width: 20px; height: 20px; border-radius: 50%; background: #0a78d4; color: #fff; font-style: normal; font-size: 13px; }
.app em { position: absolute; left: 30px; top: 8px; }
.dot::after, .cur::after { content: ""; position: absolute; left: 24px; bottom: 4px; width: 8px; height: 4px; border-radius: 2px; background: #888; }
.cur::after { left: 18px; width: 20px; background: #0a78d4; }
.cur { background: linear-gradient(#fafafa, #fafafa) 3px 5px / 49px 49px no-repeat; }
.tray { display: flex; align-items: center; font-size: 14.5px; letter-spacing: -.4px; padding: 0 0 2px 269px; }
.cloud { margin-left: 23px; }
.lang { width: 40px; margin-left: 17px; text-align: center; }
.wifi { margin-left: 17px; }
.vol { margin-left: 10px; }
.bat { margin-left: 9px; }
.clock { width: 88px; text-align: right; letter-spacing: -.3px; }
.count { margin-left: 15px; }
```
